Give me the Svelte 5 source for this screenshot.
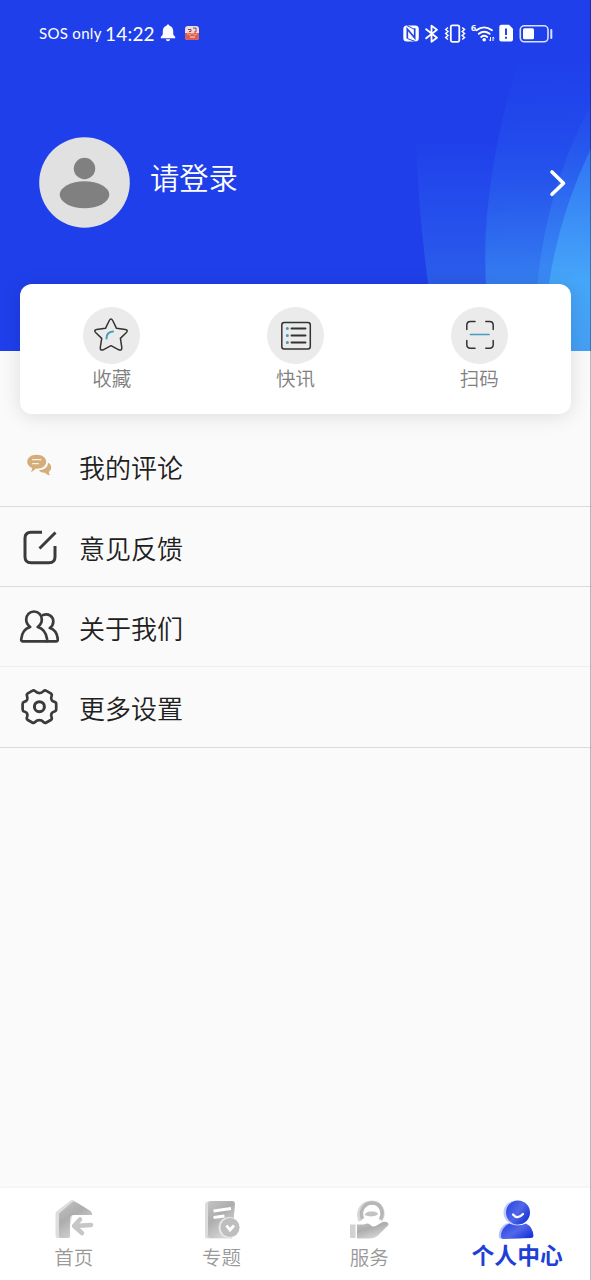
<script>
  const shortcuts = [
    { id: 'star', label: '收藏' },
    { id: 'news', label: '快讯' },
    { id: 'scan', label: '扫码' }
  ];

  const menu = [
    { id: 'comments', label: '我的评论' },
    { id: 'feedback', label: '意见反馈' },
    { id: 'about', label: '关于我们' },
    { id: 'settings', label: '更多设置' }
  ];

  const tabs = [
    { id: 'home', label: '首页' },
    { id: 'topics', label: '专题' },
    { id: 'service', label: '服务' },
    { id: 'profile', label: '个人中心' }
  ];

  let activeTab = $state('profile');
</script>

<div class="page">
  <header class="hero">
    <svg class="hero-art" viewBox="391 0 200 351" aria-hidden="true">
      <defs>
        <linearGradient id="band-a" gradientUnits="userSpaceOnUse" x1="0" y1="140" x2="0" y2="351">
          <stop offset="0" stop-color="#2b62ee" stop-opacity="0" />
          <stop offset="0.7" stop-color="#2d62ea" stop-opacity="0.9" />
          <stop offset="1" stop-color="#3272ee" />
        </linearGradient>
        <linearGradient id="band-b" gradientUnits="userSpaceOnUse" x1="500" y1="60" x2="512" y2="351">
          <stop offset="0" stop-color="#2558ee" stop-opacity="0" />
          <stop offset="0.4" stop-color="#275bed" stop-opacity="0.6" />
          <stop offset="0.78" stop-color="#3680f1" />
          <stop offset="1" stop-color="#3c91f5" />
        </linearGradient>
        <linearGradient id="band-c" gradientUnits="userSpaceOnUse" x1="0" y1="110" x2="0" y2="300">
          <stop offset="0" stop-color="#2860f0" stop-opacity="0.2" />
          <stop offset="1" stop-color="#3d91f5" />
        </linearGradient>
        <linearGradient id="band-d" gradientUnits="userSpaceOnUse" x1="0" y1="150" x2="0" y2="351">
          <stop offset="0" stop-color="#2f74f3" />
          <stop offset="0.45" stop-color="#3f97f7" />
          <stop offset="0.65" stop-color="#45a6f9" />
          <stop offset="1" stop-color="#459ff5" />
        </linearGradient>
      </defs>
      <path d="M416 140Q419 220 429 290L436 351H591V140Z" fill="url(#band-a)" />
      <path d="M522 50Q477 190 487 300L490 351H591V50Z" fill="url(#band-b)" />
      <path d="M591 105Q545 190 537 290L534 351H591Z" fill="url(#band-c)" />
      <path d="M591 148Q559 215 549 284L542 351H591Z" fill="url(#band-d)" />
    </svg>

    <div class="status">
      <span class="carrier">SOS only</span>
      <span class="clock">14:22</span>
      <svg class="bell" width="16" height="18" viewBox="0 0 16 18" fill="#fff">
        <path d="M8 .5c.8 0 1.300.5 1.400 1.200C12 2.400 13.200 4.500 13.200 7v3.500l2 2.500v1.300H.8V13l2-2.500V7c0-2.500 1.200-4.600 3.800-5.300C6.700 1 7.200.5 8 .5zM5.800 15.300h4.400c-.4 1.300-1.200 2-2.200 2s-1.800-.7-2.200-2z" />
      </svg>
      <svg class="app-badge" width="14" height="14" viewBox="0 0 14 14">
        <rect width="14" height="14" rx="3" fill="#f1d9dc" />
        <path d="M0 7h14v4a3 3 0 0 1-3 3H3a3 3 0 0 1-3-3z" fill="#df5c54" />
        <path d="M3 3.500h3v2H4M8 2h3v4H9" stroke="#7c4b68" fill="none" />
        <path d="M2 7.500l3 1.500 2-2 3 2 2-1" stroke="#f7aa6f" fill="none" />
        <path d="M5 11h5" stroke="#ffe1d7" />
      </svg>
      <svg class="indicators" width="152" height="22" viewBox="402 22 152 22" fill="none" stroke="#fff">
        <rect x="403.300" y="25.500" width="15.500" height="16" rx="3.500" fill="#fff" stroke="none" />
        <path d="M407.300 38.500v-9.500l7.400 8.800v-9.500" stroke="#2344e8" stroke-width="1.700" />
        <path d="M407 25.500l7.700 4M407.300 38.500l8 3" stroke="#2344e8" stroke-width="1" />
        <path d="M425.500 28.700l11.500 9-5.500 4v-16l5.500 4-11.500 9" stroke-width="1.800" stroke-linejoin="round" />
        <rect x="450.800" y="25.300" width="8.500" height="16.500" rx="1.500" stroke-width="1.800" />
        <path d="M448 27.500l-2.300 2 2.300 2-2.300 2 2.300 2-2.300 2 2.300 2M462.200 27.500l2.300 2-2.300 2 2.300 2-2.300 2 2.300 2-2.300 2" stroke-width="1.500" />
        <text x="471" y="31" class="wifi-gen">6</text>
        <path d="M476.500 30.300q7.500-5.800 15.500 0M478.800 33.800q5.400-4.300 10.800 0M481.200 36.900q3-2.200 6 0" stroke-width="1.900" stroke-linecap="round" />
        <circle cx="484.200" cy="39.700" r="1.800" fill="#fff" stroke="none" />
        <path d="M490.500 37v4m-1.300-1.400 1.300 1.400M493 41v-4m1.300 1.400L493 37" />
        <path d="M501.300 24.800h7.700l4 4v10.700a2 2 0 0 1-2 2h-9.700a2 2 0 0 1-2-2V26.800a2 2 0 0 1 2-2z" fill="#fff" stroke="none" />
        <path d="M506 28.500v6.500m0 1.700v2" stroke="#2344e8" stroke-width="2" />
        <rect x="520.300" y="25.800" width="27.700" height="16" rx="4" stroke="#dbe1fc" stroke-width="1.600" />
        <rect x="523" y="28.300" width="11" height="11" rx="1.500" fill="#fff" stroke="none" />
        <path d="M551.300 30v8" stroke="#dbe1fc" stroke-width="2" stroke-linecap="round" />
      </svg>
    </div>

    <div class="login">
      <svg class="avatar" width="91" height="91" viewBox="0 0 91 91">
        <circle cx="45.500" cy="45.500" r="45.300" fill="#e1e1e1" />
        <circle cx="45.500" cy="31.500" r="10.700" fill="#808080" />
        <ellipse cx="45.500" cy="57.700" rx="24.800" ry="13.500" fill="#808080" />
      </svg>
      <span class="login-text">请登录</span>
      <svg class="chevron" width="18" height="28" viewBox="0 0 18 28">
        <path d="M3 3l11.500 11.200L3 25.300" fill="none" stroke="#fff" stroke-width="3.600" stroke-linecap="round" stroke-linejoin="round" />
      </svg>
    </div>
  </header>

  <section class="card">
    {#each shortcuts as item (item.id)}
      <div class="shortcut">
        <div class="shortcut-icon">
          <svg width="57" height="57" viewBox="0 0 57 57" fill="none" stroke="#333" stroke-width="1.500" stroke-linecap="round" stroke-linejoin="round">
            {#if item.id === 'star'}
              <path d="M26.300 13.500Q28 10.500 29.700 13.500L33.500 21.300 42.300 22.600Q45.500 23.200 43.400 25.500L37.400 31.400 38.800 40.500Q39 44 35.800 42.800L28 38.700 20.200 42.800Q17 44 17.300 40.500L18.700 31.400 12.600 25.500Q10.500 23.200 13.700 22.600L22.500 21.300Z" />
              <path d="M23.500 31.500q0-6.500 6.500-7" stroke="#459fbb" stroke-width="2" />
            {:else if item.id === 'news'}
              <rect x="14.800" y="15.500" width="28.500" height="26.500" rx="2.500" />
              <path d="M24.500 21.500h14M24.500 28.500h14M24.500 35.500h14" stroke-width="1.900" />
              <path d="M20.300 21.500h.1M20.300 28.500h.1M20.300 35.500h.1" stroke="#4b9bb8" stroke-width="3" />
            {:else}
              <path d="M15.800 22.500v-4.300q0-3.700 3.700-3.700H24M34.800 14.500h3.700q3.700 0 3.700 3.700v4.300M15.800 33.500v4q0 3.700 3.700 3.700H24M34.800 41.200h3.700q3.700 0 3.700-3.700v-4" />
              <path d="M19.500 27.500h18.500" stroke="#459db9" stroke-width="1.700" />
            {/if}
          </svg>
        </div>
        <span>{item.label}</span>
      </div>
    {/each}
  </section>

  <nav class="menu">
    {#each menu as item (item.id)}
      <div class="menu-row">
        <svg width="40" height="40" viewBox="0 0 40 40" fill="none" stroke="#3b3b3d" stroke-width="2.700" stroke-linecap="round" stroke-linejoin="round">
          {#if item.id === 'comments'}
            <g fill="#d5ad7b" stroke="none">
              <path d="M17.500 8.800c5.700 0 9.700 2.800 9.700 7s-4 7-9.700 7h-1.200c-1.200 1.700-2.500 2.800-4.600 3 1-1 1.500-2.200 1.500-3.700-3-1.100-5-3.300-5-6.300 0-4.200 4-7 9.300-7z" />
              <path d="M29 16.800c2 .8 3.200 2.400 3.200 4.600 0 1.700-.8 3.200-2.400 4.300 0 1.300.4 2.300 1.300 3.300-2.400 0-3.800-.8-5-2.300-3 .2-5-.6-6.300-2.400 5.500-.2 9.200-3.300 9.200-7.500z" />
            </g>
            <path d="M13.500 13.700h8.500M13.500 17.700h6" stroke="#fff0dc" stroke-width="1.200" />
          {:else if item.id === 'feedback'}
            <path d="M23 5.300H12q-6 0-6 6v18.500q0 6 6 6h18q6 0 6-6V19M20.500 21.500L36.500 5.500" stroke-linecap="butt" stroke-width="3" />
          {:else if item.id === 'about'}
            <path d="M15 4.500c-4.600 0-7.800 3.500-7.800 8 0 3.200 1.500 5.700 4 7.500C5.700 21.500 2.700 26 2.200 32.500q-.1 1.800 1.700 1.800H26.700q1.800 0 1.500-1.800C27.300 26 24.200 21.500 18.700 20c2.600-1.800 4.100-4.300 4.100-7.500 0-4.500-3.200-8-7.800-8z" />
            <path d="M24 8c5.500-2 10.300 1.500 10.300 6.500 0 2.800-1.200 4.900-3.500 6.500 5 1.500 7.500 5.500 8 11.500q0 1.800-1.700 1.800H27.500" />
          {:else}
            <path d="M16.200 4.200Q14.700 2.900 13.200 3.800L8.800 6.300Q7.300 7.300 8 9C9.200 12.300 8 14.200 5.100 14.900Q3.600 15.300 3.600 17v5.300Q3.600 24.100 5.100 24.500C8 25.200 9.200 27.200 8 30.300Q7.300 32.100 8.800 33L13.200 35.500Q14.700 36.400 16.100 35C18.500 32.500 22.100 32.500 24.500 35Q25.900 36.400 27.400 35.500L31.800 33Q33.300 32.100 32.600 30.300C31.400 27.200 32.700 25.200 35.500 24.500Q37.200 24.100 37.200 22.300V17Q37.200 15.300 35.500 14.900C32.700 14.200 31.400 12.300 32.600 9Q33.300 7.300 31.800 6.300L27.400 3.800Q25.900 2.900 24.500 4.200C22.100 6.800 18.500 6.800 16.200 4.200Z" />
            <circle cx="20.400" cy="19.700" r="5" stroke-width="3" />
          {/if}
        </svg>
        <span>{item.label}</span>
      </div>
    {/each}
  </nav>

  <footer class="tabbar">
    {#each tabs as tab (tab.id)}
      <button class="tab" class:active={activeTab === tab.id} onclick={() => (activeTab = tab.id)}>
        <svg width="42" height="42" viewBox="0 0 42 42">
          <defs>
            <linearGradient id="metal-{tab.id}" x1="0" y1="0" x2="0.600" y2="1">
              <stop offset="0" stop-color="#c4c4c4" />
              <stop offset="0.45" stop-color="#adadad" />
              <stop offset="1" stop-color="#d8d8d8" />
            </linearGradient>
            <linearGradient id="blue-{tab.id}" x1="0" y1="0" x2="1" y2="0.7">
              <stop offset="0" stop-color="#2343df" />
              <stop offset="0.55" stop-color="#5267e9" />
              <stop offset="1" stop-color="#1936d8" />
            </linearGradient>
          </defs>
          {#if tab.id === 'home'}
            <path d="M2.500 14.500Q2.500 13 4 12L17 2q2-1.500 4.500-.5v6L14 39H4.500q-2 0-2-2z" fill="#dedede" />
            <path d="M6 14.500L19.500 3q1.500-1.200 3.500 0L37.500 12q2 1.500 1.500 4H21q-4 0-4 4v17.500q0 1.500-1.500 1.500H8q-2 0-2-2z" fill="url(#metal-home)" />
            <path d="M27 20.500L21 27l8 7M22 27L38 26" fill="none" stroke="#c6c6c6" stroke-width="4.500" stroke-linecap="round" stroke-linejoin="round" />
          {:else if tab.id === 'topics'}
            <path d="M7 2.500H31q2.500 0 2.500 2.500L31 39.500H6.500Q4 39.500 4 37V6Q4 2.500 7 2.500z" fill="#dcdcdc" />
            <path d="M9.500 2H31q3 0 3 3L31 39H9.500Q7 39 7 36V5Q7 2 9.500 2z" fill="url(#metal-topics)" />
            <path d="M12.500 12l17.500-2.500M12.500 18.500l11-1.500" fill="none" stroke="#fff" stroke-width="3" />
            <circle cx="28" cy="28.500" r="10.500" fill="#e8e8e8" />
            <circle cx="29" cy="28.500" r="9.500" fill="#bebebe" />
            <path d="M25.500 26.500l3.500 4.500 4-4.500" fill="none" stroke="#fff" stroke-width="2.800" />
          {:else if tab.id === 'service'}
            <path d="M12.500 22c-4.500-10 2-18.500 11.500-18.500C33 3.500 37.500 14 32.500 21.500" fill="none" stroke="#d8d8d8" stroke-width="4" />
            <path d="M14.500 20C11 11 17 4 24 4c8.500 0 12.500 9 8.500 16" fill="none" stroke="#b7b7b7" stroke-width="3.500" />
            <path d="M16.500 16q2-4 6.500-3.500 6.500-.5 7 3-6 3.500-13.500.5z" fill="#c3c3c3" />
            <path d="M2 25.500h5.500v13.500H3q-1 0-1-1z" fill="#d2d2d2" />
            <path d="M9 25.500h7c3-1.800 5.500-1.500 7.500 1.500 2 1 4 .5 6-1L34.500 23q6-1 6 3L30 36.500Q26.500 39.500 21.500 39.500H9z" fill="url(#metal-service)" />
          {:else}
            <circle cx="19.500" cy="13.500" r="12" fill="#c0cbfa" />
            <path d="M3 38.500q-1-9 7-14h13l2 15H5q-2 0-2-1z" fill="#b3c0f9" />
            <circle cx="22" cy="13.500" r="12" fill="url(#blue-profile)" />
            <path d="M5 37.500Q5 29 13 24.500q8.500 4 17 0 7 3.500 7.500 12.500-.2 2-2.500 2l-27.500 1Q5 40 5 37.500z" fill="url(#blue-profile)" />
            <path d="M17 15.500q4.500 5.500 10-.5" fill="none" stroke="#fff" stroke-width="2.200" stroke-linecap="round" />
          {/if}
        </svg>
        <span>{tab.label}</span>
      </button>
    {/each}
  </footer>
</div>

<style>
  :global(body) {
    background: #fafafa;
  }

  .page {
    box-sizing: border-box;
    display: flex;
    flex-direction: column;
    position: relative;
    height: 1280px;
    overflow: hidden;
    background: #fafafa;
    font-family: 'Noto Sans CJK SC', sans-serif;
    font-weight: 350;
  }

  /* hairline on the right screen edge */
  .page::after {
    content: '';
    position: absolute;
    inset: 0 0 0 auto;
    width: 1px;
    background: rgba(0, 0, 0, 0.26);
  }

  .hero {
    position: relative;
    flex: none;
    height: 351px;
    background: #1f3feb;
    color: #fff;
  }

  .hero-art {
    position: absolute;
    top: 0;
    right: 0;
    width: 200px;
    height: 351px;
  }

  .status {
    position: relative;
    display: flex;
    align-items: center;
    height: 66px;
    padding: 0 37px 0 39px;
    font-family: Lato, sans-serif;
    font-weight: 400;
    line-height: 1;
  }

  .carrier {
    width: 66px;
    font-size: 15px;
    letter-spacing: 0.3px;
    white-space: nowrap;
  }

  .clock {
    width: 55px;
    font-size: 19px;
    letter-spacing: 0.2px;
  }

  .app-badge {
    margin-left: 9px;
  }

  .indicators {
    margin-left: auto;
  }

  .wifi-gen {
    font: 700 9px 'Noto Sans', sans-serif;
    fill: #fff;
    stroke: none;
  }

  .login {
    position: relative;
    display: flex;
    align-items: center;
    margin-top: 71px;
    padding: 0 24px 0 39px;
  }

  .login-text {
    margin: 0 0 14px 20px;
    font-size: 29.3px;
    line-height: 40px;
  }

  .chevron {
    margin-left: auto;
  }

  .card {
    position: relative;
    display: grid;
    grid-template-columns: repeat(3, 1fr);
    flex: none;
    box-sizing: border-box;
    height: 130px;
    margin: -67px 20px 0;
    padding-top: 23px;
    border-radius: 12px;
    background: #fff;
    box-shadow: 0 2px 20px rgba(0, 0, 0, 0.12);
  }

  .shortcut {
    display: flex;
    flex-direction: column;
    align-items: center;
    color: #808080;
    font-size: 19.5px;
    line-height: 28px;
  }

  .shortcut-icon {
    width: 57px;
    height: 57px;
    border-radius: 50%;
    background: #ebebeb;
  }

  .menu {
    margin-top: 12.6px;
  }

  .menu-row {
    display: flex;
    align-items: center;
    gap: 20px;
    box-sizing: border-box;
    height: 80.3px;
    padding-left: 19px;
    border-bottom: 1px solid #dcdcdc;
    color: #202020;
    font-size: 26px;
    line-height: 38px;
  }

  .menu-row span {
    padding-top: 2px;
  }

  .menu-row:nth-child(3) {
    border-bottom-color: #eeeeee;
  }

  .tabbar {
    display: grid;
    grid-template-columns: repeat(4, 1fr);
    height: 92px;
    margin-top: auto;
    background: #fff;
    box-shadow: 0 -1px 2px rgba(0, 0, 0, 0.04);
  }

  .tab {
    display: flex;
    flex-direction: column;
    align-items: center;
    padding: 11px 0 0;
    border: 0;
    background: none;
    color: #999;
    font-family: inherit;
    font-size: 19.5px;
    font-weight: inherit;
    line-height: 32px;
  }

  .tab.active {
    color: #203ed8;
    font-size: 22.8px;
    font-weight: 700;
    line-height: 28px;
    white-space: nowrap;
  }
</style>
